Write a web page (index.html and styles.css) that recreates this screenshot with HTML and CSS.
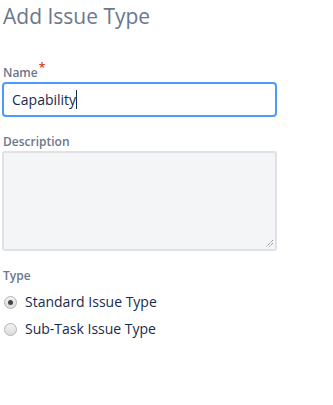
FILE: index.html
```html
<!DOCTYPE html>
<html lang="en">
<head>
    <meta charset="UTF-8">
    <title>Add Issue Type</title>
    <link rel="stylesheet" href="styles.css">
</head>
<body>
    <div class="dialog">
        <h1 class="dialog-title">Add Issue Type</h1>

        <form class="issue-form">
            <div class="field">
                <label class="field-label" for="name">Name<span class="required">*</span></label>
                <div class="text-input focused">
                    <span class="value">Capability</span><span class="caret"></span>
                </div>
            </div>

            <div class="field">
                <label class="field-label" for="description">Description</label>
                <div class="textarea">
                    <svg class="resize-grip" width="9" height="9" viewBox="0 0 9 9">
                        <path d="M8 1 L1 8 M8 4 L4 8" stroke="#6b6b6b" stroke-width="1" stroke-dasharray="1 1"/>
                    </svg>
                </div>
            </div>

            <div class="field type-field">
                <div class="field-label">Type</div>
                <label class="radio-row">
                    <span class="radio checked"></span>
                    Standard Issue Type
                </label>
                <label class="radio-row">
                    <span class="radio"></span>
                    Sub-Task Issue Type
                </label>
            </div>
        </form>
    </div>
</body>
</html>
```

FILE: styles.css
```css
body {
    margin: 0;
    padding: 0;
    background-color: #fff;
    font-family: 'Open Sans', 'Noto Sans', sans-serif;
    color: #172b4d;
}
.dialog {
    padding: 0 56px 0 2px;
}
.dialog-title {
    margin: 0;
    padding: 2px 0 0 1px;
    font-size: 21px;
    font-weight: 400;
    line-height: 28px;
    color: #6b778c;
}
.issue-form {
    margin-top: 35px;
}
.field {
    margin-bottom: 17px;
}
.field-label {
    display: block;
    font-size: 12px;
    font-weight: 600;
    line-height: 16px;
    color: #6b778c;
    padding-left: 1px;
    margin-bottom: 1px;
}
.required {
    color: #de350b;
    position: relative;
    top: -5px;
    margin-left: 1px;
}
.text-input {
    height: 31px;
    border: 2px solid #dfe1e6;
    border-radius: 4px;
    display: flex;
    align-items: center;
    padding-left: 8px;
    font-size: 14px;
    color: #172b4d;
}
.text-input.focused {
    border-color: #4c9aff;
}
.caret {
    display: inline-block;
    width: 1px;
    height: 19px;
    background-color: #172b4d;
}
.textarea {
    height: 96px;
    border: 2px solid #dfe1e6;
    border-radius: 3px;
    background-color: #f4f5f7;
    position: relative;
}
.resize-grip {
    position: absolute;
    right: 1px;
    bottom: 1px;
}
.type-field .field-label {
    margin-bottom: 0;
}
.radio-row {
    display: flex;
    align-items: center;
    gap: 8px;
    font-size: 14px;
    line-height: 18px;
    color: #172b4d;
    margin-top: 9px;
    padding-left: 2px;
}
.radio {
    width: 11px;
    height: 11px;
    border: 1px solid #b3b3b3;
    border-radius: 50%;
    background: linear-gradient(#f2f2f2, #dcdcdc);
    position: relative;
}
.radio.checked::after {
    content: '';
    position: absolute;
    left: 3px;
    top: 3px;
    width: 5px;
    height: 5px;
    border-radius: 50%;
    background-color: #444;
}
```
